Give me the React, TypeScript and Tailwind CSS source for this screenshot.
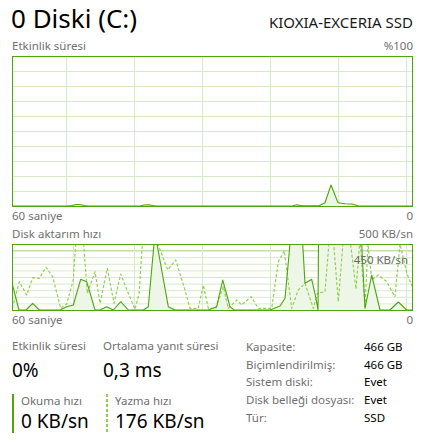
import React from "react";

const GRID = "#d9eacb";
const BORDER = "#4da60c";
const FILL = "#eef6e8";
const WRITE = "#8fd14f";

function ActivityChart() {
  const W = 401;
  const H = 151;
  const pts =
    "0,150 54,150 60,149.5 64,148.5 68,148.5 72,149.5 76,150 128,150 132,149 137,148.7 141,149.5 144,150 278,150 281,149.7 285,148.7 289.7,149.7 307,149.7 313,146.7 319,129 326,146.7 333,147.7 340,148 346,149.7 401,150";
  const hs = [1, 2, 3, 4, 5, 6, 7, 8, 9].map((k) => 0.5 + k * 15);
  const vs = [54.5, 122.5, 190.5, 258.5, 326.5, 394.5];
  return (
    <svg width={W} height={H} viewBox={`0 0 ${W} ${H}`} className="block">
      <rect x="0" y="0" width={W} height={H} fill="#ffffff" />
      {hs.map((y) => (
        <line key={"h" + y} x1="0" x2={W} y1={y} y2={y} stroke={GRID} strokeWidth="1" />
      ))}
      {vs.map((x) => (
        <line key={"v" + x} x1={x} x2={x} y1="0" y2={H} stroke={GRID} strokeWidth="1" />
      ))}
      <polygon points={`0,151 ${pts} 401,151`} fill={FILL} />
      <polyline points={pts} fill="none" stroke={BORDER} strokeWidth="1.1" strokeLinejoin="round" />
      <rect x="0.5" y="0.5" width={W - 1} height={H - 1} fill="none" stroke={BORDER} strokeWidth="1" />
    </svg>
  );
}

function TransferChart() {
  const W = 401;
  const H = 67;
  const read =
    "0,39 7,66 14,66 20.7,59.3 27.3,66 48,66 54.7,62.7 61.3,61 68.7,35.3 74.7,37.7 83,66 88,66 94.7,62.7 101.3,66 108.7,57.7 116.3,66 131.3,66 136.3,62.7 142,0 145,0 156.3,62.7 163,66 196.3,66 204.7,62.7 210.7,36 218,62.7 222,66 258,66 268,62 273,54.3 278,0 290.7,0 293,39.3 299.7,35.3 304,54.3 306,66 306.5,0 349.7,0 353,64.3 359.7,31 368,66 378,66 386.3,58 394.7,66 401,66";
  const write =
    "0,64 1.3,61 7.3,37.7 14.7,51 20.7,33.7 27.3,34.3 34,23.3 40.7,32.7 48.7,64.3 54.7,60 61.3,36 64,-5 71.3,-5 75.3,49.3 83,27.7 88,59.3 95.3,24.3 102,59.3 108.7,30 116.3,49.3 123,65.3 127,50 130.7,-5 144.7,0 146.3,1 155.7,26 163.7,16 173,46 178,64.3 186.3,64.3 191.3,41 196.3,64.3 203.7,64.3 211.3,42.7 216.3,64.3 224.7,56 229.7,61 239,52.7 246.3,64.3 259.7,64.3 266.3,17.7 272.3,6.7 279.7,64.3 286.3,46 293,39.3 301.3,64.3 305.3,49.3 313,47.7 317.3,-5 321.3,-5 326.3,57.7 331.3,-5 338,-5 344,45 348,-5 353,64 356,0 359.7,36 366.3,31 374.7,37.7 383,52.7 388,0 395,30 401,44";
  const hs = [2, 3, 4, 5, 6, 7, 8, 9].map((k) => 0.5 + k * 6.6);
  const vs = [61.5, 122.5, 190.5, 258.5, 320.5, 394.5];
  return (
    <svg width={W} height={H} viewBox={`0 0 ${W} ${H}`} className="block">
      <rect x="0" y="0" width={W} height={H} fill="#ffffff" />
      {hs.map((y) => (
        <line key={"h" + y} x1="0" x2={W} y1={y} y2={y} stroke={GRID} strokeWidth="1" />
      ))}
      <line x1="0" x2={W} y1="6.8" y2="6.8" stroke="#bfe0a6" strokeWidth="1.6" />
      {vs.map((x) => (
        <line key={"v" + x} x1={x} x2={x} y1="0" y2={H} stroke={GRID} strokeWidth="1" />
      ))}
      <polygon points={`0,67 ${read} 401,67`} fill={FILL} />
      <polyline points={write} fill="none" stroke={WRITE} strokeWidth="1.2" strokeDasharray="3 2" strokeLinejoin="round" />
      <polyline points={read} fill="none" stroke={BORDER} strokeWidth="1.1" strokeLinejoin="round" />
      <rect x="0.5" y="0.5" width={W - 1} height={H - 1} fill="none" stroke={BORDER} strokeWidth="1" />
    </svg>
  );
}

export default function App() {
  const info: [string, string][] = [
    ["Kapasite:", "466 GB"],
    ["Biçimlendirilmiş:", "466 GB"],
    ["Sistem diski:", "Evet"],
    ["Disk belleği dosyası:", "Evet"],
    ["Tür:", "SSD"],
  ];
  return (
    <div className="w-[421px] h-[444px] bg-white pl-[12px] pr-[8px] font-['Noto_Sans',sans-serif] overflow-hidden">
      <div className="flex items-baseline justify-between h-[38px] pt-[1px]">
        <span className="text-[26px] leading-[34px] text-black -ml-[1px]">0 Diski (C:)</span>
        <span className="text-[15px] leading-[34px] text-[#1a1a1a]">KIOXIA-EXCERIA SSD</span>
      </div>
      <div className="flex justify-between h-[18px] text-[11.5px] leading-[16px] text-[#707070]">
        <span>Etkinlik süresi</span>
        <span>%100</span>
      </div>
      <ActivityChart />
      <div className="flex justify-between h-[18px] text-[11.5px] leading-[17px] text-[#707070]">
        <span>60 saniye</span>
        <span>0</span>
      </div>
      <div className="flex justify-between h-[19px] text-[11.5px] leading-[17px] text-[#707070]">
        <span>Disk aktarım hızı</span>
        <span>500 KB/sn</span>
      </div>
      <div className="relative">
        <TransferChart />
        <span className="absolute right-[5px] top-[9px] text-[11.5px] leading-[14px] text-[#6b6b6b]">450 KB/sn</span>
      </div>
      <div className="flex justify-between h-[18px] text-[11.5px] leading-[17px] text-[#707070]">
        <span>60 saniye</span>
        <span>0</span>
      </div>
      <div className="flex mt-[9px]">
        <div className="w-[234px] flex flex-col">
          <div className="flex">
            <div className="w-[91px] flex flex-col">
              <span className="text-[11.5px] leading-[16px] text-[#707070]">Etkinlik süresi</span>
              <span className="text-[19px] leading-[26px] text-black mt-[3px]">0%</span>
            </div>
            <div className="flex flex-col">
              <span className="text-[11.5px] leading-[16px] text-[#707070]">Ortalama yanıt süresi</span>
              <span className="text-[19px] leading-[26px] text-black mt-[3px]">0,3 ms</span>
            </div>
          </div>
          <div className="flex mt-[11px]">
            <div className="w-[94px] flex">
              <div className="w-[2px] h-[39px] bg-[#4da60c]" />
              <div className="flex flex-col pl-[7px]">
                <span className="text-[11.5px] leading-[14px] text-[#707070]">Okuma hızı</span>
                <span className="text-[19px] leading-[26px] text-black">0 KB/sn</span>
              </div>
            </div>
            <div className="flex">
              <div className="w-[2px] h-[39px] bg-[repeating-linear-gradient(to_bottom,#8fd14f_0_3px,transparent_3px_5px)]" />
              <div className="flex flex-col pl-[7px]">
                <span className="text-[11.5px] leading-[14px] text-[#707070]">Yazma hızı</span>
                <span className="text-[19px] leading-[26px] text-black">176 KB/sn</span>
              </div>
            </div>
          </div>
        </div>
        <div className="flex flex-col">
          {info.map(([k, v]) => (
            <div key={k} className="flex text-[11.5px] leading-[17.7px]">
              <span className="w-[118px] text-[#707070]">{k}</span>
              <span className="text-black">{v}</span>
            </div>
          ))}
        </div>
      </div>
    </div>
  );
}
